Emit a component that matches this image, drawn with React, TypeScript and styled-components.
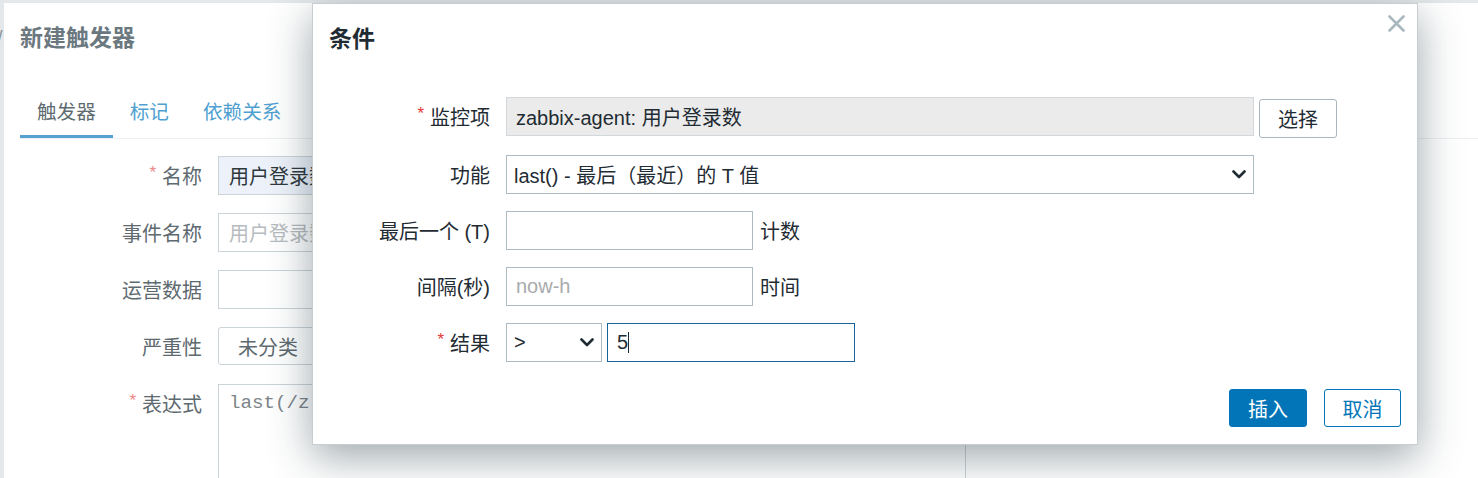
import React from "react";
import styled, { createGlobalStyle } from "styled-components";

const GlobalStyle = createGlobalStyle`
  html, body { margin: 0; padding: 0; background: #fff; }
  body { font-family: "Liberation Sans", Arial, "Noto Sans CJK SC", sans-serif; }
  * { box-sizing: border-box; }
`;

const Page = styled.div`
  position: relative;
  width: 1478px;
  height: 478px;
  overflow: hidden;
  background: #e4e8ea;
  display: flex;
  align-items: flex-start;
  padding-top: 3px;
`;

const SideStrip = styled.div`
  width: 4px;
  flex: none;
  overflow: hidden;
  padding-top: 25px;
  font-size: 20px;
  line-height: 20px;
  color: #8c979c;
  text-indent: -3px;
`;

/* ---------- background dialog (dimmed) ---------- */

const BackDialog = styled.div`
  flex: 1;
  min-width: 0;
  height: 475px;
  background: #fff;
  overflow: hidden;
`;

const BackHeader = styled.div`
  height: 66px;
  display: flex;
  align-items: center;
  padding-left: 16px;
  font-size: 23px;
  font-weight: bold;
  color: #6b787f;
`;

const TabList = styled.div`
  display: flex;
  margin: 19px 0 0 16px;
  border-bottom: 1px solid #edf0f2;
`;

const Tab = styled.div<{ $active?: boolean }>`
  padding: 12px 17px 11px;
  line-height: 24px;
  font-size: 19.6px;
  color: ${(p) => (p.$active ? "#5d6a70" : "#4f9fd1")};
  border-bottom: 3px solid ${(p) => (p.$active ? "#55a1d2" : "transparent")};
`;

const BackForm = styled.div`
  display: grid;
  grid-template-columns: 198px 748px;
  column-gap: 16px;
  row-gap: 18px;
  padding-top: 17px;
`;

const BackLabel = styled.div`
  height: 39px;
  display: flex;
  justify-content: flex-end;
  align-items: center;
  font-size: 20px;
  color: #5e6a70;
`;

const BackAsterisk = styled.span`
  color: #ec8686;
  font-size: 17px;
  margin-right: 6px;
  position: relative;
  top: -3px;
`;

const BackField = styled.div<{ $bg?: string; $muted?: boolean }>`
  height: 39px;
  border: 1px solid #cbd4d8;
  background: ${(p) => p.$bg || "#fff"};
  display: flex;
  align-items: center;
  padding: 0 10px;
  font-size: 20px;
  color: ${(p) => (p.$muted ? "#b7bcbf" : "#2e383d")};
  white-space: nowrap;
  overflow: hidden;
`;

const SegGroup = styled.div`
  display: flex;
  height: 38px;
`;

const SegButton = styled.div`
  display: flex;
  align-items: center;
  width: 300px;
  padding: 0 19px;
  border: 1px solid #cbd4d8;
  border-radius: 3px 0 0 3px;
  font-size: 20px;
  color: #5e6a70;
  background: #fff;
  white-space: nowrap;
`;

const BackTextarea = styled.div`
  height: 130px;
  border: 1px solid #cbd4d8;
  padding: 7px 10px;
  font-family: "Liberation Mono", "Courier New", monospace;
  font-size: 19.2px;
  line-height: 22px;
  color: #7d858a;
  white-space: nowrap;
  overflow: hidden;
`;

/* ---------- modal ---------- */

const Modal = styled.div`
  position: absolute;
  left: 312px;
  top: 3px;
  width: 1106px;
  height: 442px;
  background: #fff;
  border: 1px solid #c6ced2;
  box-shadow: 0 12px 40px rgba(25, 45, 55, 0.42);
  display: flex;
  flex-direction: column;
`;

const ModalHeader = styled.div`
  height: 66px;
  flex: none;
  display: flex;
  align-items: center;
  padding-left: 16px;
  font-size: 23px;
  font-weight: bold;
  color: #1f2c33;
`;

const CloseButton = styled.button`
  position: absolute;
  top: 11px;
  right: 12px;
  width: 17px;
  height: 17px;
  padding: 0;
  border: 0;
  background: none;
  display: flex;
`;

const ModalForm = styled.div`
  display: grid;
  grid-template-columns: 177px 1fr;
  column-gap: 16px;
  row-gap: 17px;
  padding-top: 27px;
`;

const Label = styled.div`
  height: 39px;
  display: flex;
  justify-content: flex-end;
  align-items: center;
  font-size: 20px;
  color: #1f2c33;
  white-space: nowrap;
`;

const Asterisk = styled.span`
  color: #e33734;
  font-size: 17px;
  margin-right: 6px;
  position: relative;
  top: -3px;
`;

const ControlRow = styled.div<{ $gap: number }>`
  display: flex;
  align-items: flex-start;
  gap: ${(p) => p.$gap}px;
`;

const ReadonlyField = styled.div`
  width: 748px;
  height: 39px;
  background: #ebebeb;
  border: 1px solid #d2d8db;
  display: flex;
  align-items: center;
  padding-left: 9px;
  font-size: 20px;
  color: #1f2c33;
  white-space: nowrap;
`;

const PickButton = styled.button`
  width: 78px;
  height: 39px;
  margin-top: 2px;
  border: 1px solid #a9b7be;
  border-radius: 3px;
  background: #fff;
  font-family: inherit;
  font-size: 20px;
  color: #1f2c33;
  padding: 0;
`;

const Select = styled.div<{ $width: number }>`
  width: ${(p) => p.$width}px;
  height: 39px;
  border: 1px solid #acbbc2;
  background: #fff;
  display: flex;
  align-items: center;
  justify-content: space-between;
  padding: 0 7px 0 7px;
  font-size: 20px;
  color: #1f2c33;
  white-space: nowrap;
`;

const TextField = styled.div<{ $width: number; $focused?: boolean; $placeholder?: boolean }>`
  width: ${(p) => p.$width}px;
  height: 39px;
  border: 1px solid ${(p) => (p.$focused ? "#17649a" : "#acbbc2")};
  background: #fff;
  display: flex;
  align-items: center;
  padding-left: 9px;
  font-size: 20px;
  color: ${(p) => (p.$placeholder ? "#a9abac" : "#1f2c33")};
  white-space: nowrap;
`;

const Caret = styled.span`
  display: inline-block;
  width: 1px;
  height: 21px;
  background: #1f2c33;
`;

const Suffix = styled.span`
  align-self: center;
  font-size: 20px;
  color: #1f2c33;
  white-space: nowrap;
`;

const Footer = styled.div`
  margin-top: auto;
  display: flex;
  justify-content: flex-end;
  gap: 17px;
  padding: 0 16px 17px 0;
`;

const PrimaryButton = styled.button`
  width: 78px;
  height: 38px;
  border: 1px solid #0275b8;
  border-radius: 3px;
  background: #0275b8;
  color: #fff;
  font-family: inherit;
  font-size: 20px;
  padding: 0;
`;

const SecondaryButton = styled.button`
  width: 77px;
  height: 38px;
  border: 1px solid #0275b8;
  border-radius: 3px;
  background: #fff;
  color: #0275b8;
  font-family: inherit;
  font-size: 20px;
  padding: 0;
`;

const Chevron = () => (
  <svg width="14" height="9" viewBox="0 0 14 9" fill="none">
    <path d="M1.5 1.5 L7 7 L12.5 1.5" stroke="#1f2c33" strokeWidth="2.6" strokeLinecap="round" strokeLinejoin="round" />
  </svg>
);

const CloseIcon = () => (
  <svg width="17" height="17" viewBox="0 0 17 17" fill="none">
    <path d="M1.5 1.5 L15.5 15.5 M15.5 1.5 L1.5 15.5" stroke="#a9b8bf" strokeWidth="2.6" strokeLinecap="round" />
  </svg>
);

export default function App() {
  return (
    <>
      <GlobalStyle />
      <Page>
        <SideStrip>/</SideStrip>
        <BackDialog>
          <BackHeader>新建触发器</BackHeader>
          <TabList>
            <Tab $active>触发器</Tab>
            <Tab>标记</Tab>
            <Tab>依赖关系</Tab>
          </TabList>
          <BackForm>
            <BackLabel>
              <BackAsterisk>*</BackAsterisk>名称
            </BackLabel>
            <BackField $bg="#edf2fa">用户登录数</BackField>
            <BackLabel>事件名称</BackLabel>
            <BackField $muted>用户登录数</BackField>
            <BackLabel>运营数据</BackLabel>
            <BackField />
            <BackLabel>严重性</BackLabel>
            <SegGroup>
              <SegButton>未分类</SegButton>
            </SegGroup>
            <BackLabel>
              <BackAsterisk>*</BackAsterisk>表达式
            </BackLabel>
            <BackTextarea>last(/z</BackTextarea>
          </BackForm>
        </BackDialog>

        <Modal>
          <ModalHeader>条件</ModalHeader>
          <CloseButton aria-label="关闭">
            <CloseIcon />
          </CloseButton>
          <ModalForm>
            <Label>
              <Asterisk>*</Asterisk>监控项
            </Label>
            <ControlRow $gap={5}>
              <ReadonlyField>zabbix-agent: 用户登录数</ReadonlyField>
              <PickButton>选择</PickButton>
            </ControlRow>

            <Label>功能</Label>
            <ControlRow $gap={5}>
              <Select $width={748}>
                <span>last() - 最后（最近）的 T 值</span>
                <Chevron />
              </Select>
            </ControlRow>

            <Label>最后一个 (T)</Label>
            <ControlRow $gap={7}>
              <TextField $width={247} />
              <Suffix>计数</Suffix>
            </ControlRow>

            <Label>间隔(秒)</Label>
            <ControlRow $gap={7}>
              <TextField $width={247} $placeholder>now-h</TextField>
              <Suffix>时间</Suffix>
            </ControlRow>

            <Label>
              <Asterisk>*</Asterisk>结果
            </Label>
            <ControlRow $gap={5}>
              <Select $width={96}>
                <span>&gt;</span>
                <Chevron />
              </Select>
              <TextField $width={248} $focused>
                5<Caret />
              </TextField>
            </ControlRow>
          </ModalForm>
          <Footer>
            <PrimaryButton>插入</PrimaryButton>
            <SecondaryButton>取消</SecondaryButton>
          </Footer>
        </Modal>
      </Page>
    </>
  );
}
